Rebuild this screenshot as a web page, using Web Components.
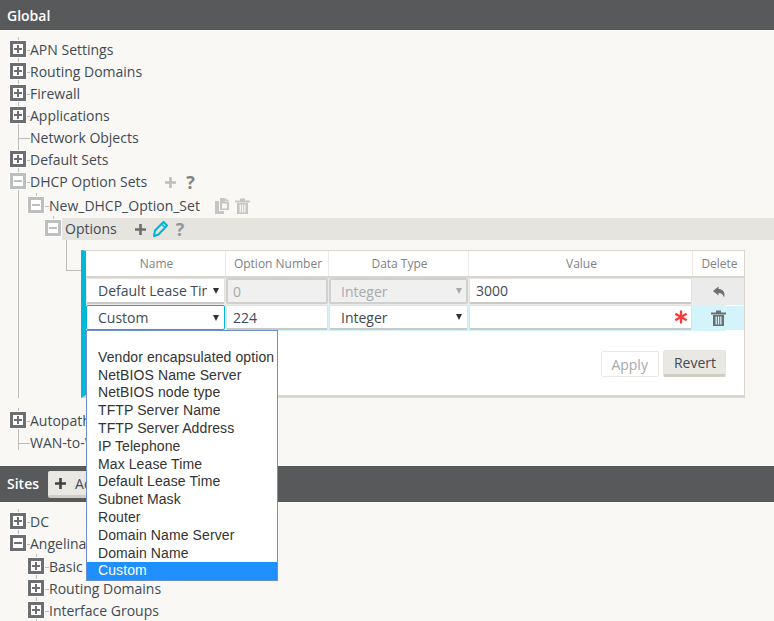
<!DOCTYPE html>
<html>
<head>
<meta charset="utf-8">
<title>DHCP Option Sets</title>
<style>
  html, body { margin: 0; height: 621px; overflow: hidden; background: #faf8f4; }
  body { font: 14px "Open Sans", sans-serif; color: #414a54; }
</style>
</head>
<body>
<app-section label="Global" style="--pad-top:9px;--pad-bottom:12px">
  <tree-node label="APN Settings" state="plus"></tree-node>
  <tree-node label="Routing Domains" state="plus"></tree-node>
  <tree-node label="Firewall" state="plus"></tree-node>
  <tree-node label="Applications" state="plus"></tree-node>
  <tree-node label="Network Objects" state="leaf"></tree-node>
  <tree-node label="Default Sets" state="plus"></tree-node>
  <tree-node label="DHCP Option Sets" state="minus" muted>
    <ui-icon slot="actions" name="plus" color="#bcbec0" style="margin-left:18px"></ui-icon>
    <ui-icon slot="actions" name="help" color="#808285" style="margin-left:10px"></ui-icon>
    <tree-node label="New_DHCP_Option_Set" state="minus" muted last style="margin-top:2px;--indent:17px;--stub:5px">
      <ui-icon slot="actions" name="copy" color="#c4c5c5" style="margin-left:15px"></ui-icon>
      <ui-icon slot="actions" name="trash" color="#c4c5c5" style="margin-left:5px"></ui-icon>
      <tree-node label="Options" state="minus" muted last highlight style="margin-top:1px">
        <ui-icon slot="actions" name="plus" color="#6d6e71" style="margin-left:18px"></ui-icon>
        <ui-icon slot="actions" name="pencil" color="#00b4d8" style="margin-left:6px"></ui-icon>
        <ui-icon slot="actions" name="help" color="#939598" style="margin-left:7px"></ui-icon>
        <option-grid></option-grid>
      </tree-node>
    </tree-node>
  </tree-node>
  <tree-node label="Autopath Groups" state="plus" style="margin-top:12px"></tree-node>
  <tree-node label="WAN-to-WAN Forwarding" state="leaf" last></tree-node>
</app-section>
<app-section label="Sites" tall style="--pad-top:9px;--pad-bottom:0px">
  <ui-button slot="tools" tone="add"><ui-icon name="plus" color="#414042" style="margin-right:9px"></ui-icon>Add Site</ui-button>
  <tree-node label="DC" state="plus"></tree-node>
  <tree-node label="Angelina" state="minus" last>
    <tree-node label="Basic" state="plus" style="margin-top:1px;--stub:5px"></tree-node>
    <tree-node label="Routing Domains" state="plus" style="--stub:5px"></tree-node>
    <tree-node label="Interface Groups" state="plus" style="--stub:5px"></tree-node>
  </tree-node>
</app-section>

<script>
const ICONS = {
  plus: `<svg width="11" height="11" viewBox="0 0 11 11"><path d="M5.500 0v11M0 5.500h11" stroke="currentColor" stroke-width="2.600"/></svg>`,
  pencil: `<svg width="17" height="18" viewBox="0 0 17 18"><path d="M2 16l1-5.500L11.500 2 15 5.500 6.500 14.500z" fill="none" stroke="currentColor" stroke-width="2" stroke-linejoin="round"/><path d="M9.500 4l3.500 3.500" stroke="currentColor" stroke-width="1.600"/></svg>`,
  copy: `<svg width="15" height="16" viewBox="0 0 15 16"><path d="M5 0h5v4h4v8H5z" fill="currentColor"/><path d="M10.500 0L14.500 3.500h-4z" fill="currentColor"/><path d="M0 3h4v10h5v3H0z" fill="currentColor"/><path d="M7 5.500h5v5H7z" fill="#faf8f4"/></svg>`,
  trash: `<svg width="15" height="16" viewBox="0 0 15 16"><path d="M0 2.500h15v2H0zM5 2.500V.5h5v2" fill="currentColor"/><path d="M2 5h11v11H2zM4.600 6.500v8h1.300v-8zM6.900 6.500v8h1.300v-8zM9.200 6.500v8h1.300v-8z" fill="currentColor" fill-rule="evenodd"/></svg>`,
  reply: `<svg width="12" height="12" viewBox="0 0 12 12"><path d="M5.500 .5L0 5l5.500 4.500V7c2.700 0 4.300 1 5.500 4.500C12.500 6.500 10 3 5.500 3z" fill="currentColor"/></svg>`,
  star: `<svg width="14" height="14" viewBox="0 0 14 14"><path d="M7 .5v13M1.300 3.700l11.400 6.600M1.300 10.300l11.400-6.600" stroke="currentColor" stroke-width="2.300"/></svg>`
};

class UiIcon extends HTMLElement {
  connectedCallback() {
    const name = this.getAttribute("name");
    const body = name === "help" ? "?" : ICONS[name];
    this.attachShadow({ mode: "open" }).innerHTML = `
      <style>
        :host { display: inline-flex; align-items: center; justify-content: center; color: ${this.getAttribute("color") || "inherit"}; }
        .q { font: 700 18px/18px "Open Sans", sans-serif; }
        svg { display: block; }
      </style>
      ${name === "help" ? `<span class="q">${body}</span>` : body}`;
  }
}

class UiButton extends HTMLElement {
  constructor() {
    super();
    this.attachShadow({ mode: "open" }).innerHTML = `
      <style>
        :host { display: inline-flex; align-items: center; box-sizing: border-box; height: 27px; padding: 0 9px 0 10px;
                font: 14px "Open Sans", sans-serif; color: #414a54; background: #e9e8e3;
                border: 1px solid #e6e4df; border-bottom: 3px solid #cfcdc4; border-radius: 2px; }
        :host([tone="off"]) { height: 26px; margin-top: 1px; padding: 0 10px 0 9px; background: #fff; color: #a7a9ac;
                border: 1px solid #e9e8e3; }
        :host([tone="add"]) { padding: 0 10px 0 6px; margin-left: 3px; }
      </style>
      <slot></slot>`;
  }
}

class AppSection extends HTMLElement {
  connectedCallback() {
    this.attachShadow({ mode: "open" }).innerHTML = `
      <style>
        :host { display: block; }
        header { display: flex; align-items: center; gap: 6px; height: 30px; padding-left: 7px;
                 background: #58595b; color: #fff; font: 600 14px "Open Sans", sans-serif; }
        :host([tall]) header { height: 36px; }
        :host([tall]) header span { margin-top: -2px; }
        .body { padding: var(--pad-top) 0 var(--pad-bottom) 10px; }
      </style>
      <header><span>${this.getAttribute("label")}</span><slot name="tools"></slot></header>
      <div class="body"><slot></slot></div>`;
  }
}

class TreeNode extends HTMLElement {
  connectedCallback() {
    const state = this.getAttribute("state");
    const sign = state === "leaf" ? "" : `
      <span class="box"><i class="h"></i>${state === "plus" ? `<i class="v"></i>` : ""}</span>`;
    this.attachShadow({ mode: "open" }).innerHTML = `
      <style>
        :host { display: block; position: relative; --line: #bdbdb9; }
        :host::before { content: ""; position: absolute; left: 8px; top: -2px; bottom: 0; width: 1px; background: var(--line); }
        :host([last])::before { bottom: auto; height: 20px; }
        .row { display: flex; align-items: center; height: 22px; position: relative; }
        .box { position: relative; box-sizing: border-box; flex: none; width: 16px; height: 16px; margin-top: -2px;
               background: #fff; border: 3px solid #6d6e71; box-shadow: 0 0 0 1px #fff; }
        :host([muted]) .box { border-color: #bcbec0; }
        .box i { position: absolute; background: #6d6e71; }
        :host([muted]) .box i { background: #bcbec0; }
        .h { left: 1px; right: 1px; top: 4px; height: 2px; }
        .v { top: 1px; bottom: 1px; left: 4px; width: 2px; }
        .stub { flex: none; width: var(--stub, 4px); height: 1px; background: var(--line); }
        :host([state="leaf"]) .stub { width: 11px; margin-left: 9px; }
        .label { display: flex; align-items: center; box-sizing: border-box; height: 22px; padding-bottom: 2px; white-space: nowrap; }
        ::slotted(ui-icon) { margin-top: 2px; }
        :host([highlight]) .stub { width: 1px; }
        :host([highlight]) .label { flex: 1; padding-left: 3px; background: #e6e4df; }
        .kids { padding-left: var(--indent, 18px); }
      </style>
      <div class="row">${sign}<span class="stub"></span>
        <span class="label">${this.getAttribute("label")}<slot name="actions"></slot></span>
      </div>
      <div class="kids"><slot></slot></div>`;
  }
}

const GRID_COLUMNS = ["Name", "Option Number", "Data Type", "Value", "Delete"];

const LEASE_OPTIONS = [
  "", "Vendor encapsulated option", "NetBIOS Name Server", "NetBIOS node type", "TFTP Server Name",
  "TFTP Server Address", "IP Telephone", "Max Lease Time", "Default Lease Time", "Subnet Mask",
  "Router", "Domain Name Server", "Domain Name", "Custom"
];

class OptionList extends HTMLElement {
  connectedCallback() {
    this.attachShadow({ mode: "open" }).innerHTML = `
      <style>
        :host { position: absolute; left: 0; top: 79px; z-index: 5; display: block; box-sizing: border-box; width: 192px;
                background: #fff; border: 1px solid #6d8fd0; font: 14px/17.8px "Liberation Sans", Arial, sans-serif;
                letter-spacing: .1px; color: #333; }
        div { height: 17.8px; padding-left: 11px; white-space: nowrap; }
        .on { background: #1e90ff; color: #fff; }
      </style>
      ${LEASE_OPTIONS.map(o => `<div class="${o === "Custom" ? "on" : ""}">${o}</div>`).join("")}`;
  }
}

class OptionGrid extends HTMLElement {
  field(text, kind, arrow) {
    return `<div class="field ${kind}"><span class="txt">${text}</span>${arrow ? `<span class="arrow"></span>` : ""}</div>`;
  }

  connectedCallback() {
    this.attachShadow({ mode: "open" }).innerHTML = `
      <style>
        :host { display: block; position: relative; box-sizing: border-box; width: 664px; height: 148px; margin: 10px 0 0 19px;
                background: #fff; border-top: 1px solid #d8d6ce; border-right: 1px solid #d8d6ce;
                border-bottom: 3px solid #d8d6ce; border-left: 5px solid #00b8d9; }
        :host::before { content: ""; position: absolute; left: -20px; top: -11px; width: 14px; height: 30px;
                border-left: 1px solid #bdbdb9; border-bottom: 1px solid #bdbdb9; }
        .cols { display: grid; grid-template-columns: 140px 103px 140px 224px 51px; }
        .head { height: 25px; border-bottom: 2px solid #d8d6ce; }
        .head div { display: flex; align-items: center; justify-content: center; padding-left: 2px; font-size: 12px; color: #808285;
                    border-right: 1px solid #ecebe6; }
        .head div:last-child { border-right: 0; }
        .r1 { height: 27px; background: #ebebeb; }
        .r2 { height: 26px; background: linear-gradient(to right, #d4f4fb 640px, transparent 640px); }
        .field { display: flex; align-items: center; box-sizing: border-box; height: 26px; margin-right: 1px; padding: 0 5px 0 11px;
                 background: #fff; border: 1px solid #e2e1dd; border-bottom: 2px solid #c9c9c7; border-radius: 2px;
                 font-size: 14px; color: #414a54; overflow: hidden; }
        .r2 .field { height: 25px; }
        .num { padding-left: 6px; }
        .off { background: #f0f0f0; color: #a7a9ac; border: 2px solid #d0d0ce; padding-left: 10px; padding-right: 4px; }
        .off.num { padding-left: 5px; }
        .on { border: 1px solid #00b4d8; }
        .txt { flex: 1; white-space: nowrap; overflow: hidden; }
        .arrow { flex: none; margin-left: 6px; border: 3.500px solid transparent; border-top: 6px solid #333; border-bottom: 0; }
        .off .arrow { border-top-color: #a7a9ac; }
        .del { display: flex; align-items: center; justify-content: center; color: #6d6e71; }
        .r2 .del { background: #d4f4fb; height: 24px; margin-top: 1px; }
        .r2 .del ui-icon { margin-left: -1px; }
        .star { color: #f93a3a; margin-right: -2px; }
        .tools { display: flex; justify-content: flex-end; gap: 4px; padding: 19px 18px 0 0; }
      </style>
      <div class="cols head">${GRID_COLUMNS.map(c => `<div>${c}</div>`).join("")}</div>
      <div class="cols r1">
        ${this.field("Default Lease Time", "", true)}
        ${this.field("0", "off num")}
        ${this.field("Integer", "off", true)}
        ${this.field("3000", "num")}
        <div class="del"><ui-icon name="reply"></ui-icon></div>
      </div>
      <div class="cols r2">
        ${this.field("Custom", "on", true)}
        ${this.field("224", "num")}
        ${this.field("Integer", "", true)}
        <div class="field num"><span class="txt"></span><ui-icon class="star" name="star"></ui-icon></div>
        <div class="del"><ui-icon name="trash"></ui-icon></div>
      </div>
      <div class="tools">
        <ui-button tone="off">Apply</ui-button>
        <ui-button>Revert</ui-button>
      </div>
      <option-list></option-list>`;
  }
}

customElements.define("ui-icon", UiIcon);
customElements.define("ui-button", UiButton);
customElements.define("app-section", AppSection);
customElements.define("tree-node", TreeNode);
customElements.define("option-list", OptionList);
customElements.define("option-grid", OptionGrid);
</script>
</body>
</html>
